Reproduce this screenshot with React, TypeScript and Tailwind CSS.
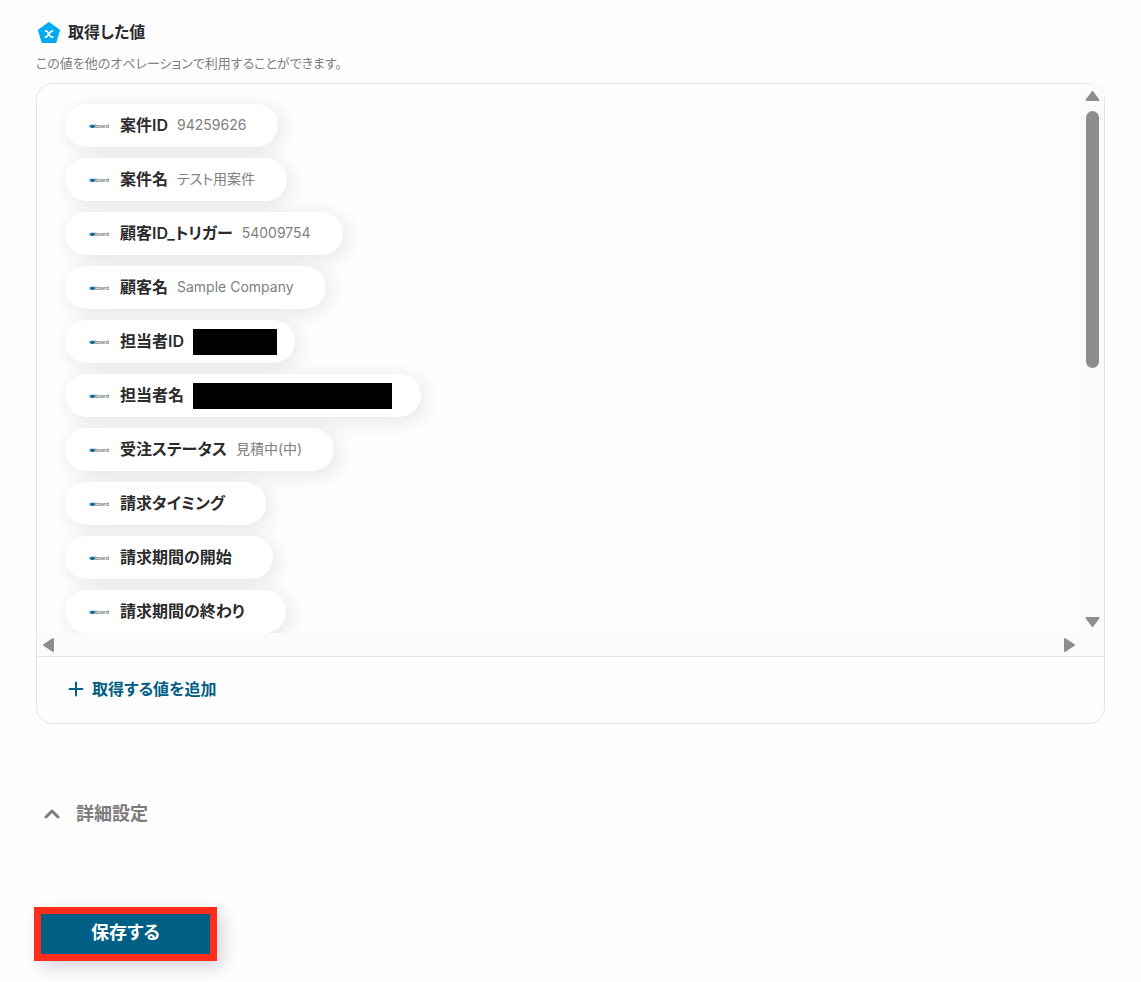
import { Plus, ChevronUp } from "lucide-react"

type Item = {
  label: string
  value?: string
  // width classes of a masked value and of the bar that hides it
  masked?: { slot: string; bar: string }
}

const items: Item[] = [
  { label: "案件ID", value: "94259626" },
  { label: "案件名", value: "テスト用案件" },
  { label: "顧客ID_トリガー", value: "54009754" },
  { label: "顧客名", value: "Sample Company" },
  { label: "担当者ID", masked: { slot: "w-[70px]", bar: "w-[84px]" } },
  { label: "担当者名", masked: { slot: "w-[196px]", bar: "w-[199px]" } },
  { label: "受注ステータス", value: "見積中(中)" },
  { label: "請求タイミング" },
  { label: "請求期間の開始" },
  { label: "請求期間の終わり" },
]

const PentagonIcon = () => (
  <svg viewBox="0 0 24 24" className="size-6 shrink-0" aria-hidden="true">
    <path
      d="M13 3 L23 10.2 L19.5 22 L6.5 22 L3 10.2 Z"
      fill="#00aaf5"
      stroke="#00aaf5"
      strokeWidth="2"
      strokeLinejoin="round"
    />
    <path
      d="M9.6 10.8 C11.2 10.8 11.6 11.4 12.2 12.8 L13.6 15.4 C14.2 16.6 14.8 17.2 16.6 17.2 M16.6 10.8 C15.2 10.8 14.6 11.6 13.8 12.7 L12 15.3 C11.2 16.5 10.6 17.2 9.4 17.2"
      fill="none"
      stroke="#fff"
      strokeWidth="1.7"
      strokeLinecap="round"
    />
  </svg>
)

const BoardLogo = () => (
  <svg viewBox="0 0 21 8" className="h-2 w-[21px] shrink-0" aria-hidden="true">
    <ellipse cx="3" cy="4.3" rx="3" ry="1.7" fill="#5fa6c8" />
    <ellipse cx="3.8" cy="4.3" rx="2" ry="1.6" fill="#07639a" />
    <text
      x="6"
      y="6"
      fill="#3c3f48"
      fontFamily="Inter, sans-serif"
      fontSize="5"
    >
      board
    </text>
  </svg>
)

const Chip = ({ label, value, masked }: Item) => (
  <li className="flex h-[43px] shrink-0 items-center rounded-full bg-white pr-8 pl-6 shadow-[4px_4px_20px_rgba(60,40,70,0.12)]">
    <BoardLogo />
    <span className="ml-[10px] pb-px text-base font-semibold text-[#2b2a2d]">
      {label}
    </span>
    <span className="ml-[9px] pb-px text-sm text-[#808080]">{value}</span>
    {masked && (
      <span className={`relative h-[26px] ${masked.slot}`}>
        <span className={`absolute top-0 left-0 h-full bg-black ${masked.bar}`} />
      </span>
    )}
  </li>
)

const App = () => {
  return (
    <main className="min-h-screen bg-[#fefefe] px-9 pt-5 pb-5 font-['Inter','Noto_Sans_CJK_JP',sans-serif] [font-feature-settings:'palt']">
      <header>
        <h1 className="flex h-6 items-center gap-2 text-base font-semibold text-[#2b2a2d]">
          <PentagonIcon />
          取得した値
        </h1>
        <p className="mt-[9px] h-5 text-[13px] leading-5 text-[#808080]">
          この値を他のオペレーションで利用することができます。
        </p>
      </header>

      <section className="mt-[10px] rounded-2xl border border-[#e5e4e6]">
        <div className="grid grid-cols-[1fr_24px] grid-rows-[549px_23px] border-b border-[#e5e4e6]">
          <ul className="flex flex-col items-start gap-[11px] overflow-hidden rounded-tl-2xl pt-5 pl-7">
            {items.map((item) => (
              <Chip key={item.label} {...item} />
            ))}
          </ul>

          {/* Vertical scrollbar */}
          <div className="flex flex-col items-center bg-[#fcfafd] py-[6px]">
            <svg viewBox="0 0 16 12" className="h-3 w-4" aria-hidden="true">
              <path
                d="M8.5 2 L14.5 10 L2.5 10 Z"
                fill="#8e8c8f"
                stroke="#8e8c8f"
                strokeWidth="2"
                strokeLinejoin="round"
              />
            </svg>
            <div className="mt-[9px] h-[257px] w-[13px] rounded-full bg-[#8e8c8f]" />
            <svg viewBox="0 0 16 12" className="mt-auto h-3 w-4" aria-hidden="true">
              <path
                d="M8.5 11 L14.5 3 L2.5 3 Z"
                fill="#8e8c8f"
                stroke="#8e8c8f"
                strokeWidth="2"
                strokeLinejoin="round"
              />
            </svg>
          </div>

          {/* Horizontal scrollbar */}
          <div className="flex items-center justify-between bg-[#fcfafd] px-[5px]">
            <svg viewBox="0 0 12 16" className="h-4 w-3" aria-hidden="true">
              <path
                d="M2 8 L11 2 L11 14 Z"
                fill="#8e8c8f"
                stroke="#8e8c8f"
                strokeWidth="2"
                strokeLinejoin="round"
              />
            </svg>
            <svg viewBox="0 0 12 16" className="h-4 w-3" aria-hidden="true">
              <path
                d="M11 8 L2 2 L2 14 Z"
                fill="#8e8c8f"
                stroke="#8e8c8f"
                strokeWidth="2"
                strokeLinejoin="round"
              />
            </svg>
          </div>
          <div className="bg-[#fcfafd]" />
        </div>

        <button
          type="button"
          className="flex h-[66px] items-center gap-[5px] pb-[2px] pl-7 text-base font-semibold text-[#005f84]"
        >
          <Plus className="size-[22px]" strokeWidth={2.2} />
          取得する値を追加
        </button>
      </section>

      <button
        type="button"
        className="mt-[76px] flex h-7 items-center gap-3 pl-1 text-lg font-semibold text-[#7d7b7e]"
      >
        <ChevronUp className="size-6" strokeWidth={3} />
        詳細設定
      </button>

      <button
        type="button"
        className="-ml-[2px] mt-[79px] flex h-[54px] w-[183px] items-center justify-center border-[7px] border-[#ff2d1a] bg-[#005f84] pb-[2px] text-lg font-bold text-white shadow-[6px_6px_16px_rgba(60,40,90,0.2)]"
      >
        保存する
      </button>
    </main>
  )
}

export default App
